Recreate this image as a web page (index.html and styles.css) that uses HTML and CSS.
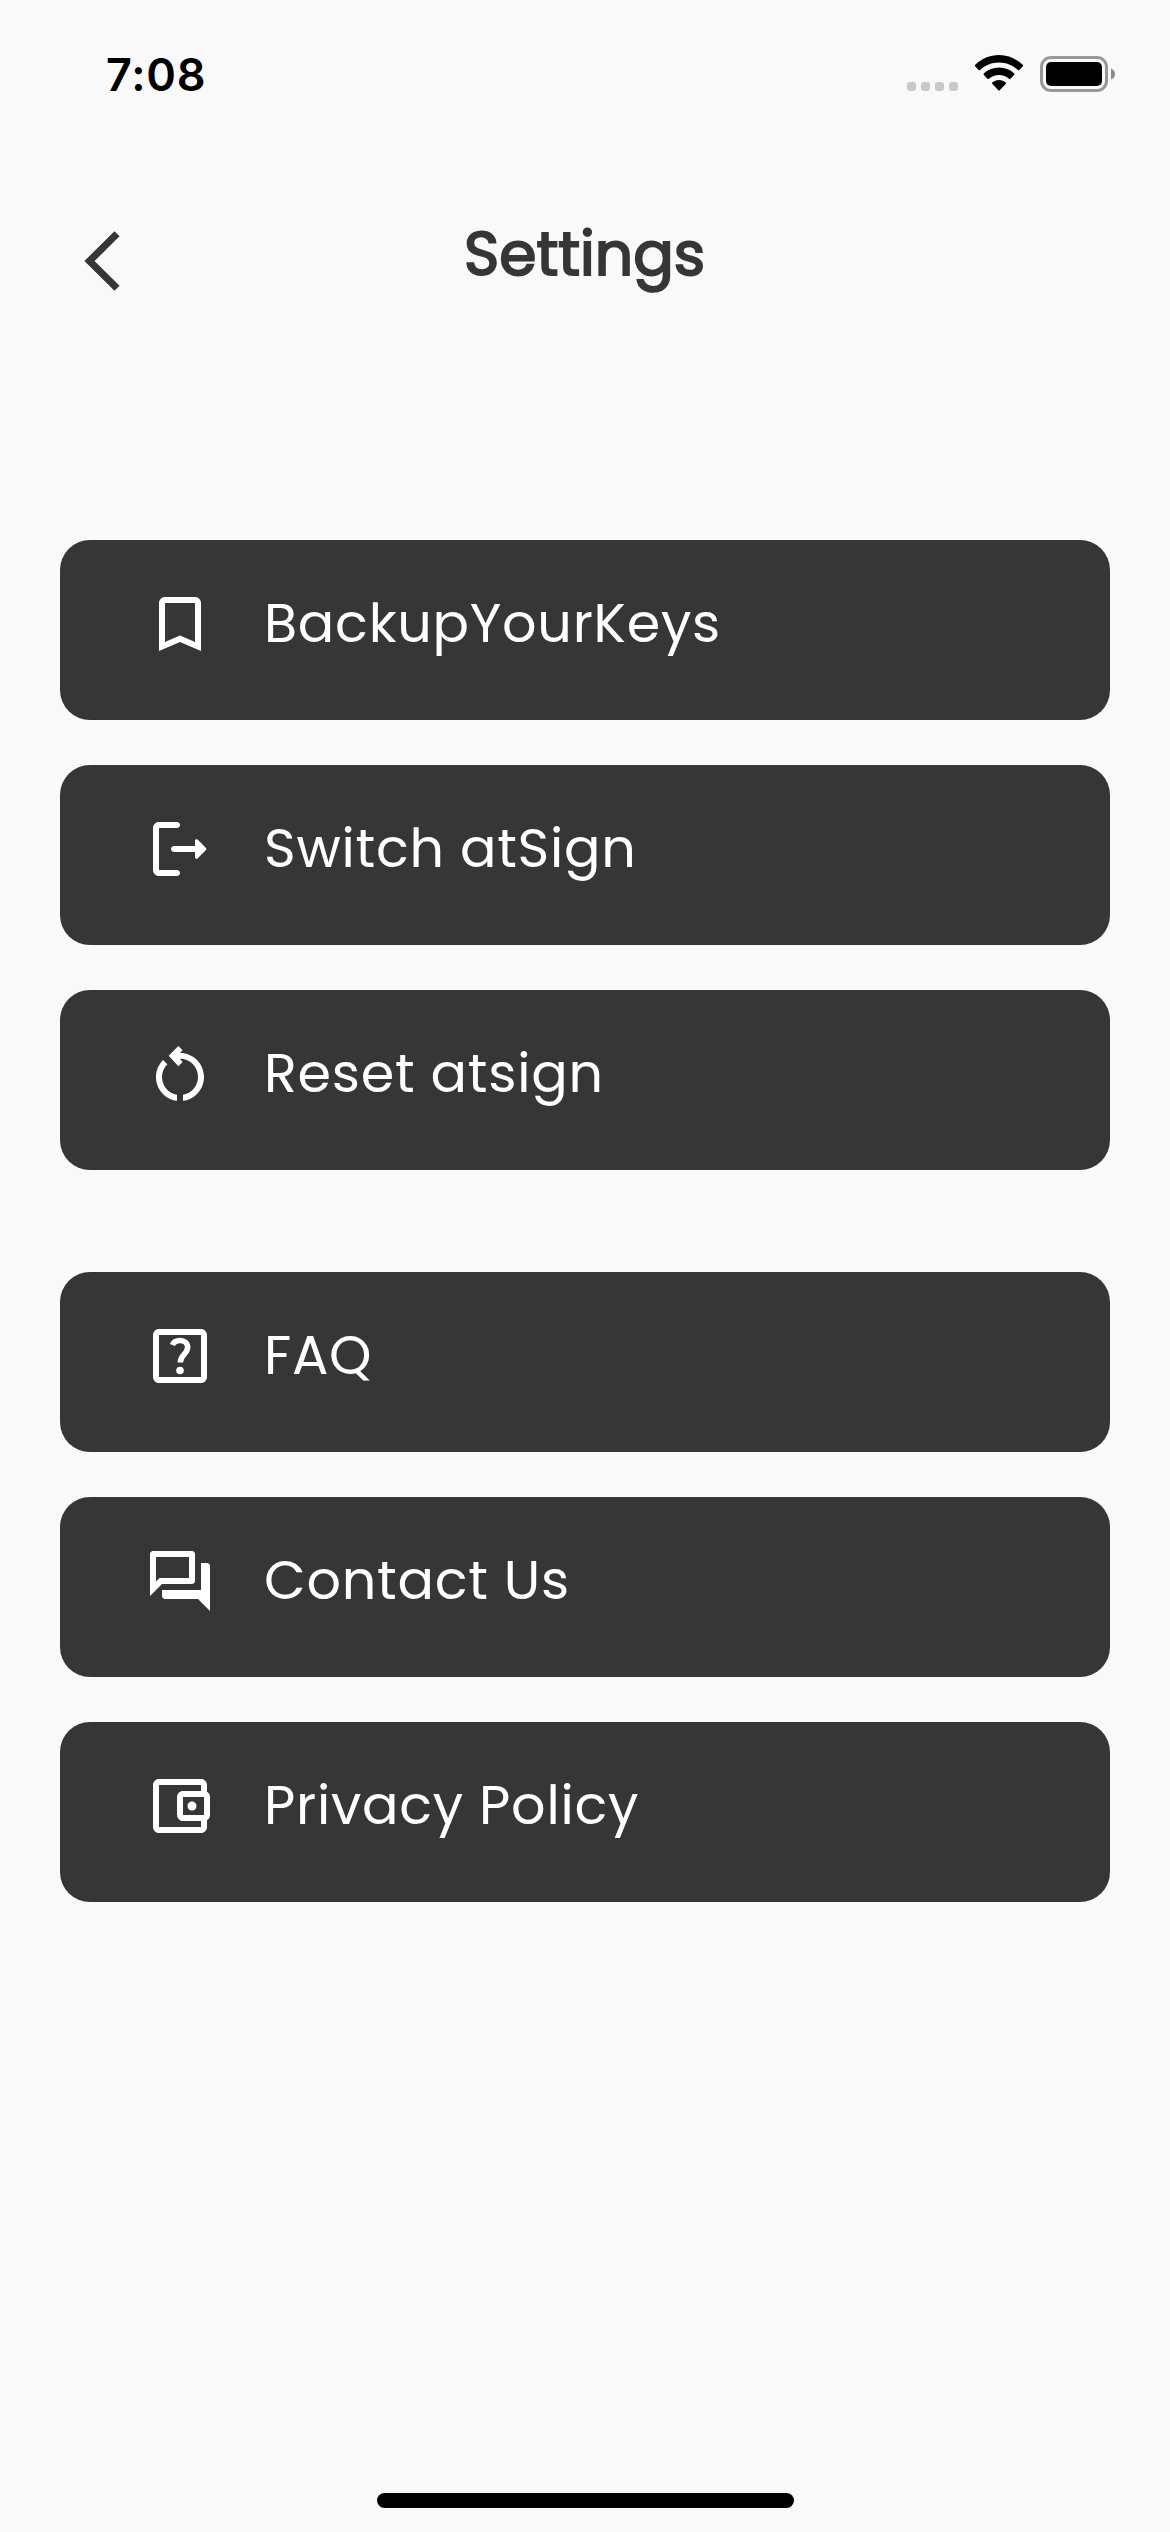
FILE: index.html
```html
<!DOCTYPE html>
<html lang="en">
<head>
<meta charset="utf-8">
<title>Settings</title>
<link rel="stylesheet" href="styles.css">
</head>
<body>
<div class="screen">
  <div class="status-bar">
    <span class="time">7:08</span>
    <div class="status-icons">
      <div class="signal"><i></i><i></i><i></i><i></i></div>
      <svg class="wifi" viewBox="0 0 48 36">
        <path d="M24 0C33 0 41.500 3.700 47.700 9.700Q48.500 10.600 47.700 11.400L44.300 14.900Q43.600 15.600 42.800 14.900C37.800 10.200 31.200 7.500 24 7.500S10.200 10.200 5.200 14.900Q4.400 15.600 3.700 14.900L.3 11.400Q-.5 10.600.3 9.700C6.500 3.700 15 0 24 0z"/>
        <path d="M24 12.500C29.800 12.500 35 14.700 39 18.300Q39.900 19.200 39.100 20L35.500 23.700Q34.800 24.400 34 23.700C31.400 21.300 27.900 19.900 24 19.900S16.600 21.300 14 23.700Q13.200 24.400 12.500 23.700L8.900 20Q8.100 19.200 9 18.300C13 14.700 18.200 12.500 24 12.500z"/>
        <path d="M24 25C26.700 25 28.800 26 30.500 27.300Q31.400 28.100 30.600 29L24.700 35.200Q24 35.900 23.300 35.200L17.400 29Q16.600 28.100 17.500 27.300C19.200 26 21.300 25 24 25z"/>
      </svg>
      <svg class="battery" viewBox="0 0 75 36">
        <rect x="1.500" y="1.500" width="65" height="33" rx="9.500" fill="none" stroke="#989898" stroke-width="3"/>
        <rect x="6" y="6" width="56" height="24" rx="5"/>
        <path d="M71 12.500Q75 14 75 18T71 23.500z" fill="#8a8a8a"/>
      </svg>
    </div>
  </div>

  <header class="header">
    <svg class="back" viewBox="0 0 36 60"><path d="M33 2.800L5.500 30L33 57.200" fill="none" stroke="#363636" stroke-width="7.200"/></svg>
    <h1 class="title">Settings</h1>
  </header>

  <main class="menu">
    <section class="group">
      <div class="item">
        <svg class="icon" viewBox="0 0 24 24"><path d="M17 3H7c-1.100 0-2 .9-2 2v16l7-3 7 3V5c0-1.100-.9-2-2-2zm0 15l-5-2.180L7 18V5h10v13z"/></svg>
        <span class="label">BackupYourKeys</span>
      </div>
      <div class="item">
        <svg class="icon" viewBox="0 0 24 24"><path d="M5 5h6c.55 0 1-.45 1-1s-.45-1-1-1H5c-1.100 0-2 .9-2 2v14c0 1.100.9 2 2 2h6c.55 0 1-.45 1-1s-.45-1-1-1H5V5z"/><path d="M20.650 11.650l-2.790-2.790c-.32-.32-.86-.1-.86.350V11h-7c-.55 0-1 .45-1 1s.45 1 1 1h7v1.790c0 .45.540.67.850.350l2.790-2.790c.2-.19.200-.51.010-.7z"/></svg>
        <span class="label">Switch atSign</span>
      </div>
      <div class="item">
        <svg class="icon" viewBox="0 0 24 24"><path d="M8.220 5.890L11.450 2.670L12.870 4.080L12 4.970C16.500 4.970 20 8.570 20 12.970C20 17.030 16.950 20.440 13 20.930V18.910C15.840 18.430 18 15.960 18 12.970C18 9.630 15.300 6.900 11.950 6.950L12.870 7.980L11.450 9.400zM6.350 7.300L7.780 8.730C6.670 9.840 6 11.350 6 12.970C6 15.960 8.160 18.430 11 18.910V20.930C7.050 20.440 4 17.030 4 12.970C4 10.830 4.850 8.800 6.350 7.300z"/></svg>
        <span class="label">Reset atsign</span>
      </div>
    </section>
    <section class="group">
      <div class="item">
        <svg class="icon" viewBox="0 0 24 24"><path fill-rule="evenodd" d="M5 3h14c1.100 0 2 .9 2 2v14c0 1.100-.9 2-2 2H5c-1.100 0-2-.9-2-2V5c0-1.100.9-2 2-2zM5 5v14h14V5z"/><path d="M9.450 8.350C9.850 7.350 10.800 6.800 12 6.800C13.500 6.800 14.550 7.750 14.550 9.100C14.550 11.400 12.100 11.550 12.100 14.150" fill="none" stroke="#fff" stroke-width="1.850"/><circle cx="12" cy="16.850" r="1.270"/></svg>
        <span class="label">FAQ</span>
      </div>
      <div class="item">
        <svg class="icon" viewBox="0 0 24 24"><path d="M15 4v7H5.170L4 12.170V4h11m1-2H3c-.55 0-1 .45-1 1v14l4-4h10c.55 0 1-.45 1-1V3c0-.55-.45-1-1-1zm5 4h-2v9H6v2c0 .55.45 1 1 1h11l4 4V7c0-.55-.45-1-1-1z"/></svg>
        <span class="label">Contact Us</span>
      </div>
      <div class="item">
        <svg class="icon" viewBox="0 0 24 24"><path d="M21 7.280V5c0-1.100-.9-2-2-2H5c-1.110 0-2 .9-2 2v14c0 1.100.89 2 2 2h14c1.100 0 2-.9 2-2v-2.280A2 2 0 0 0 22 15V9a2 2 0 0 0-1-1.720zM20 9v6h-7V9h7zM5 19V5h14v2h-6c-1.100 0-2 .9-2 2v6c0 1.100.9 2 2 2h6v2H5z"/><circle cx="16" cy="12" r="1.500"/></svg>
        <span class="label">Privacy Policy</span>
      </div>
    </section>
  </main>

  <footer class="footer"><div class="home-indicator"></div></footer>
</div>
</body>
</html>
```
FILE: styles.css
```css
* { box-sizing: border-box; }

body {
  margin: 0;
  background: #f9f9f9;
  font-family: Poppins, Inter, sans-serif;
}

.screen {
  display: flex;
  flex-direction: column;
  width: 1170px;
  height: 2532px;
}

.status-bar {
  display: flex;
  justify-content: space-between;
  align-items: flex-start;
  height: 141px;
  padding: 55px 55px 0 106px;
}

.time {
  font: 600 45px/40px Inter, sans-serif;
  letter-spacing: 0.77px;
}

.status-icons { display: flex; }

.signal {
  display: flex;
  gap: 5px;
  margin-top: 27px;
}

.signal i {
  width: 9px;
  height: 9px;
  border-radius: 3px;
  background: #c8c8c8;
}

.wifi {
  width: 48px;
  height: 36px;
  margin-left: 17px;
}

.battery {
  width: 75px;
  height: 36px;
  margin: 1px 0 0 17px;
}

.header {
  display: flex;
  align-items: flex-start;
  height: 399px;
  padding: 90px 84px 0;
}

.back {
  width: 36px;
  height: 60px;
}

.title {
  margin: -1px 0 0 344px;
  color: #363636;
  font-size: 60px;
  font-weight: 400;
  line-height: 48px;
  -webkit-text-stroke: 2px #363636;
}

.menu {
  display: flex;
  flex-direction: column;
  gap: 102px;
  padding: 0 60px;
}

.group {
  display: flex;
  flex-direction: column;
  gap: 45px;
}

.item {
  display: flex;
  align-items: flex-start;
  gap: 48px;
  height: 180px;
  padding: 48px 84px;
  border-radius: 30px;
  background: #363636;
  color: #fff;
}

.icon {
  width: 72px;
  height: 72px;
  fill: #fff;
}

.label {
  margin-top: -1px;
  font-size: 54px;
  font-weight: 400;
  line-height: 72px;
  letter-spacing: 0.75px;
  white-space: nowrap;
}

.footer {
  display: flex;
  justify-content: center;
  margin-top: auto;
  padding: 0 0 24px 1px;
}

.home-indicator {
  width: 417px;
  height: 15px;
  border-radius: 8px;
  background: #000;
}
```
